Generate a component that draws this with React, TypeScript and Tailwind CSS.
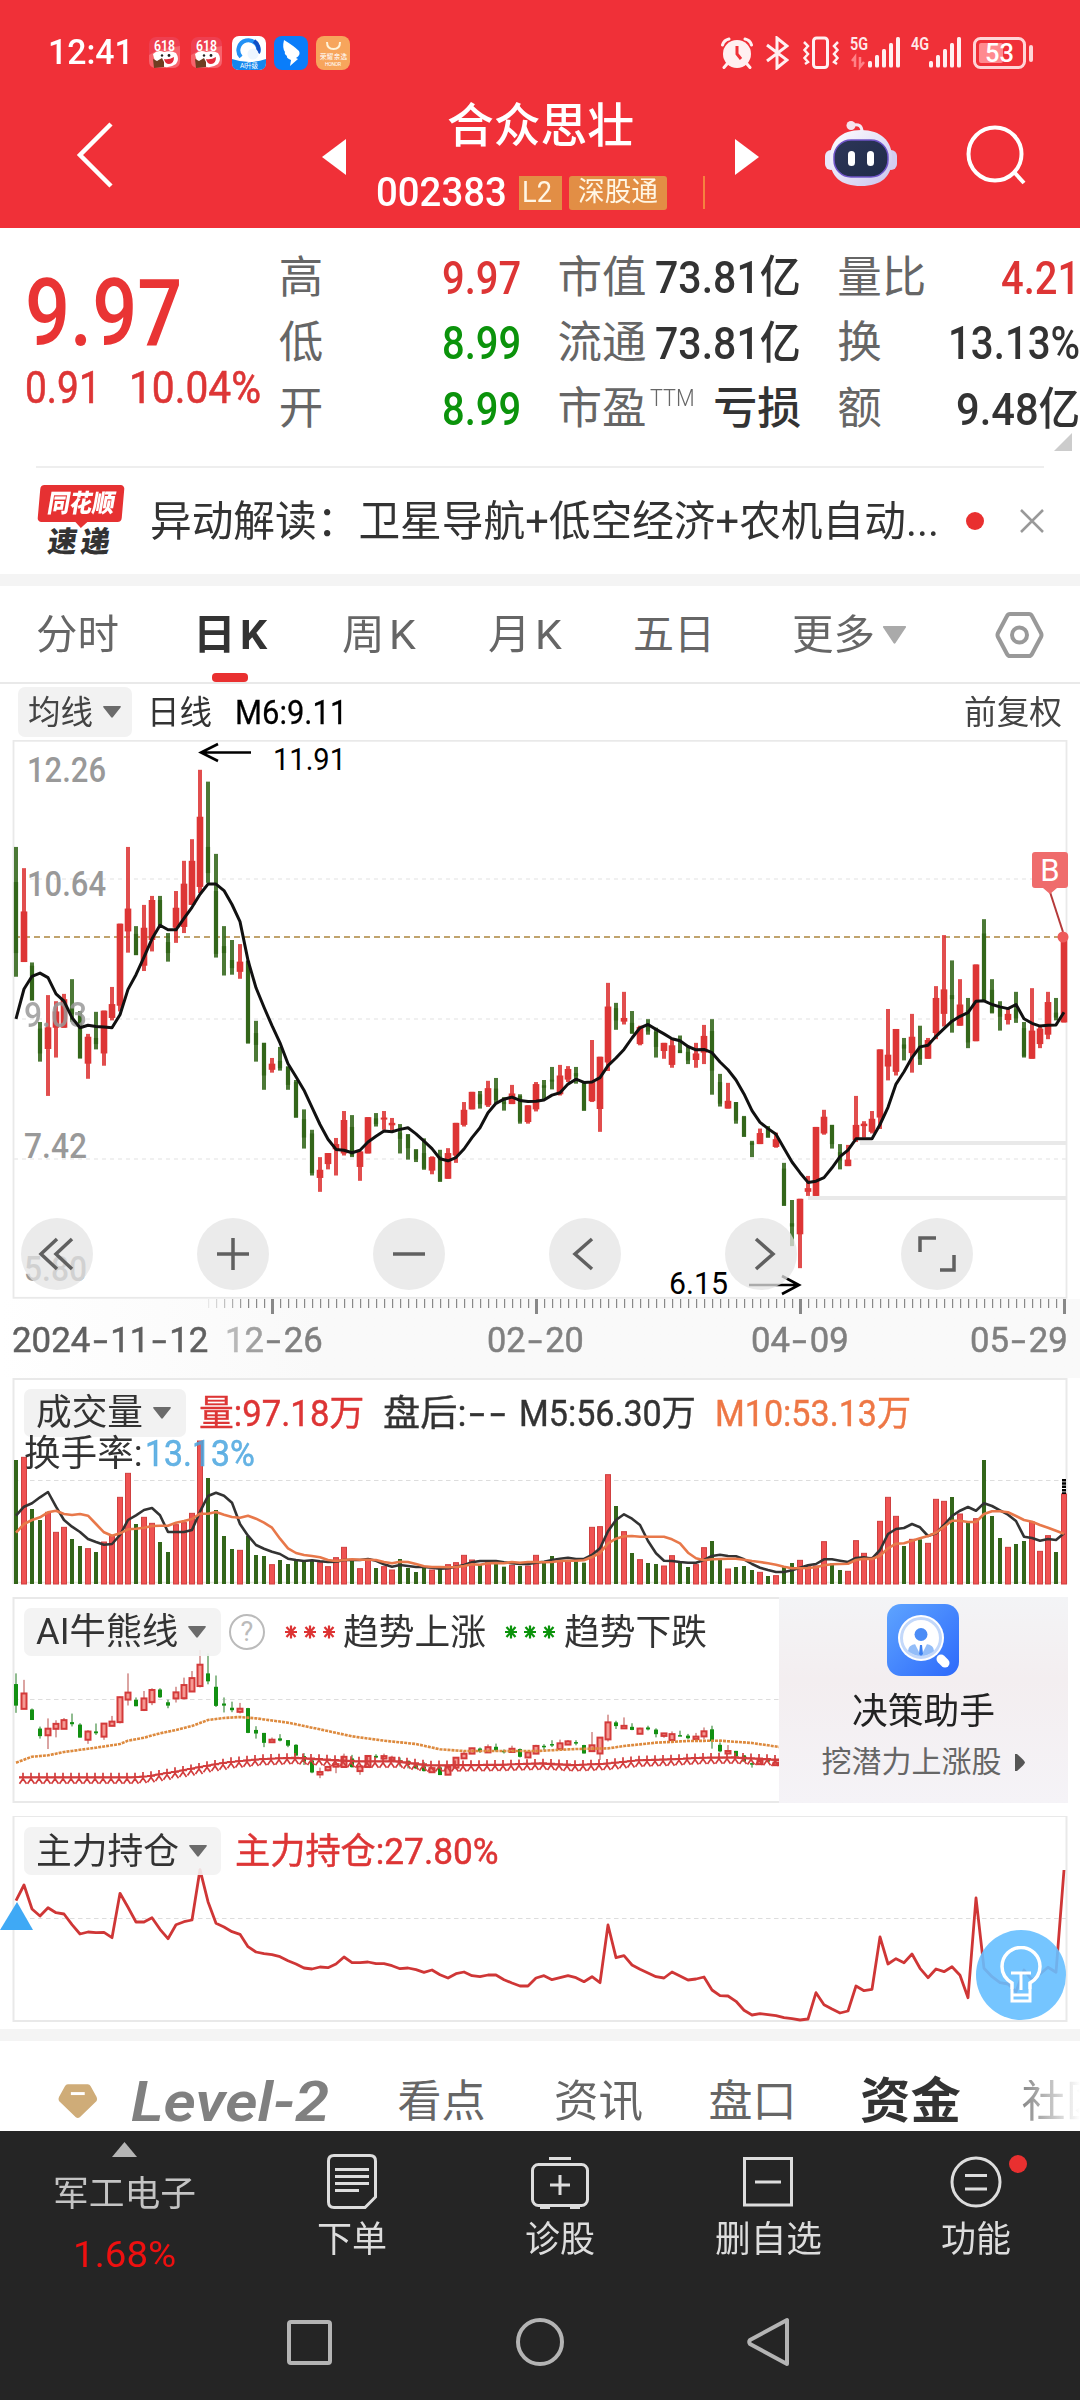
import React, { useLayoutEffect, useRef, useState } from 'react';

/** Single line of text squeezed horizontally to the width given by its class. */
function Fit({ className = '', children }: { className?: string; children: React.ReactNode }) {
  const outer = useRef<HTMLSpanElement>(null);
  const inner = useRef<HTMLSpanElement>(null);
  const [scale, setScale] = useState(1);
  useLayoutEffect(() => {
    if (outer.current && inner.current && inner.current.offsetWidth > 0) {
      setScale(outer.current.offsetWidth / inner.current.offsetWidth);
    }
  }, [children]);
  return (
    <span ref={outer} className={'block shrink-0 whitespace-nowrap leading-none ' + className}>
      <span ref={inner} className="inline-block origin-left" style={{ transform: `scaleX(${scale})` }}>
        {children}
      </span>
    </span>
  );
}

/** Hyphen as wide as a digit. */
function Dash() {
  return <span className="inline-block w-[20px] scale-x-[1.5] text-center">-</span>;
}

const X = (i: number) => 16 + 8 * i;
const RED = '#dd3535';
const GREEN = '#33661a';

// rising (1) or falling (0), high, body top, body bottom, low
const candles: number[][] = [
  [0,262,348,522,580],[1,314,420,544,544],[0,545,553,638,638],[0,691,707,768,788],[1,625,704,757,872],[1,640,665,705,778],
  [1,622,635,705,705],[0,586,655,672,690],[0,664,675,780,780],[1,720,727,793,830],[0,666,730,745,758],[1,663,663,768,798],
  [1,605,647,681,687],[1,450,450,651,665],[1,262,413,469,521],[0,456,475,527,527],[1,404,460,553,566],[1,382,392,490,518],
  [0,382,392,455,460],[0,473,495,522,543],[1,370,411,460,497],[1,296,352,458,473],[1,243,296,404,404],[1,73,188,360,375],
  [0,102,262,326,350],[0,279,370,524,533],[0,456,505,522,577],[0,490,539,559,575],[1,500,543,568,585],[0,540,542,742,744],
  [0,688,718,747,788],[0,742,742,822,857],[1,779,793,808,815],[0,752,786,804,810],[0,800,800,845,857],[0,833,838,925,925],
  [0,905,929,974,1001],[0,955,964,1061,1067],[1,1022,1053,1073,1107],[1,1012,1012,1039,1052],[1,975,990,1003,1067],
  [1,909,931,1013,1018],[0,919,948,1018,1022],[1,1008,1008,1046,1080],[1,924,924,1013,1013],[0,914,927,941,947],
  [1,909,925,930,955],[1,926,938,944,957],[0,941,962,977,1013],[0,966,966,1000,1028],[0,1003,1003,1028,1034],
  [0,976,1012,1050,1053],[1,1020,1022,1055,1064],[0,1004,1020,1082,1082],[1,1000,1012,1075,1075],[1,938,938,1018,1036],
  [1,887,906,943,947],[1,862,862,905,905],[0,860,868,892,903],[1,835,853,895,899],[0,828,854,882,892],[0,875,886,892,908],
  [1,845,866,892,892],[0,868,872,935,940],[1,895,895,936,940],[1,838,843,905,910],[0,833,846,852,880],[0,801,832,837,856],
  [1,796,822,868,871],[1,799,806,832,838],[0,801,816,824,842],[0,838,840,908,908],[1,735,838,885,887],[1,776,776,904,960],
  [1,595,653,790,811],[0,644,657,687,710],[1,617,681,690,697],[0,664,693,718,720],[1,700,703,745,748],[0,684,698,714,722],
  [0,705,715,752,778],[1,742,742,762,781],[1,730,748,796,803],[0,724,760,767,767],[0,750,764,785,794],[1,742,768,784,803],
  [1,698,725,766,794],[0,684,713,810,869],[0,818,838,891,898],[1,840,884,903,903],[0,887,887,932,940],[0,921,923,972,972],
  [0,982,986,992,1022],[1,952,963,990,990],[0,946,950,974,974],[1,962,978,997,999],[0,1036,1050,1141,1141],
  [0,1127,1184,1192,1240],[1,1124,1124,1211,1294],[1,1068,1098,1107,1117],[1,948,948,1117,1117],[1,906,923,964,967],
  [0,943,943,990,1001],[0,990,1010,1030,1052],[1,992,1028,1044,1044],[1,872,943,980,985],[1,934,940,946,974],
  [1,909,928,960,964],[1,758,758,925,953],[1,659,771,800,834],[1,708,708,813,822],[0,730,746,756,785],[1,671,727,767,815],
  [0,700,750,782,796],[1,730,735,781,781],[1,603,632,718,733],[1,478,611,671,702],[0,540,625,635,717],[1,586,648,700,700],
  [0,632,662,741,755],[1,550,550,738,738],[0,439,474,641,641],[0,586,612,668,670],[0,640,652,678,712],[1,658,671,686,697],
  [0,617,660,682,693],[0,691,706,775,778],[1,608,712,781,781],[1,700,707,745,755],[1,617,642,722,733],[0,632,668,680,687],
  [1,483,483,692,692],
];

const ma6 = [683,610,579,571,582,622,640,680,705,699,702,703,705,673,611,575,532,487,454,465,465,437,410,378,353,353,369,403,445,540,607,655,700,742,793,825,858,900,942,978,1003,1005,1011,1005,985,971,958,960,954,950,965,983,1001,1026,1031,1023,1002,974,950,913,890,880,875,883,886,885,882,870,864,843,831,839,838,827,798,779,758,730,705,697,709,720,732,737,751,759,758,766,789,808,833,867,908,937,952,966,1000,1034,1060,1084,1081,1072,1048,1021,1005,977,977,977,942,900,843,813,778,752,748,726,707,689,677,668,640,639,648,654,658,648,683,694,701,699,698,667];
const volume = [270,262,417,450,427,487,472,507,528,536,546,516,498,382,310,462,442,460,516,546,464,458,430,213,324,420,498,537,541,498,555,558,584,570,582,570,570,570,578,590,563,532,572,596,567,594,590,600,567,594,606,594,600,594,584,578,556,570,582,578,582,590,586,588,588,556,574,558,572,572,572,578,472,470,314,408,485,549,569,579,582,588,557,578,591,584,533,513,566,597,591,588,600,607,618,617,591,579,571,590,588,515,580,600,604,512,550,562,454,382,439,528,508,508,520,388,394,381,432,459,446,270,438,504,532,522,513,456,544,497,546,372];
const volM5 = [437,410,400,382,366,410,450,470,486,507,516,524,522,495,450,436,420,414,436,486,486,486,480,425,378,368,377,398,462,497,525,536,545,552,566,570,573,571,574,576,575,570,570,570,567,572,583,590,585,588,591,591,593,596,595,590,585,577,573,573,573,577,580,582,582,578,575,570,566,563,567,567,555,535,484,450,433,446,465,513,550,572,573,576,578,578,570,558,554,558,559,568,582,593,600,606,606,601,593,586,582,568,568,572,576,564,562,566,540,492,477,474,462,472,498,490,465,438,422,411,422,400,408,421,434,453,500,504,512,507,510,490];
const volM10 = [488,462,450,442,427,422,432,435,432,437,462,487,497,490,478,476,473,468,467,467,458,453,447,431,431,426,434,441,443,437,446,458,473,506,535,549,555,558,562,570,573,570,568,569,569,570,576,580,575,576,582,589,591,591,592,591,588,583,584,580,579,580,576,578,576,576,577,576,573,572,572,571,561,549,520,506,499,498,500,500,500,500,508,520,548,565,571,568,567,566,566,569,573,576,580,584,590,595,595,594,592,586,583,582,581,570,566,567,557,535,521,520,512,505,498,488,470,452,452,456,456,432,424,424,427,438,450,455,465,473,482,491];
const holding = [302,255,327,348,323,338,342,374,402,396,398,397,413,280,322,366,366,353,388,416,374,365,360,209,305,370,381,395,403,440,456,461,464,470,482,492,504,507,501,503,492,471,488,488,486,491,491,497,506,504,509,517,510,524,534,521,516,527,530,525,525,539,549,558,558,534,527,539,533,527,533,545,530,548,375,473,467,495,508,519,530,534,516,528,540,537,531,570,587,588,604,631,645,641,644,647,653,656,660,657,578,614,627,639,633,558,572,568,411,492,476,488,462,505,533,507,515,500,526,593,294,505,530,548,552,575,510,540,522,502,517,210];

// sparse control points: [bar index, level]
const bullCurve = [[0,1178],[2,1160],[4,1156],[6,1146],[10,1133],[13,1122],[14,1112],[16,1103],[18,1090],[20,1080],[22,1068],[24,1050],[26,1044],[28,1041],[30,1045],[34,1058],[38,1078],[42,1099],[46,1112],[50,1122],[53,1138],[56,1143],[65,1143],[70,1137],[74,1135],[76,1128],[80,1118],[84,1113],[88,1112],[92,1119],[96,1133]];
const bearCurve = [[0,1226],[14,1226],[16,1222],[20,1206],[23,1192],[26,1180],[30,1171],[34,1167],[37,1171],[42,1178],[47,1178],[51,1190],[56,1189],[60,1188],[65,1184],[69,1189],[73,1185],[77,1175],[81,1172],[85,1167],[89,1166],[93,1171],[96,1176]];

function interpolate(points: number[][], i: number) {
  for (let k = 1; k < points.length; k++) {
    const [a, va] = points[k - 1];
    const [b, vb] = points[k];
    if (i <= b) return va + ((vb - va) * (i - a)) / (b - a);
  }
  return points[points.length - 1][1];
}

const line = (data: number[], y: (v: number) => number) => data.map((v, i) => `${X(i)},${y(v).toFixed(1)}`).join(' ');

function Caret({ className = 'ml-[10px]' }: { className?: string }) {
  return (
    <svg className={'h-[12px] w-[18px] shrink-0 ' + className} viewBox="0 0 18 12">
      <path d="M1 0H17Q18.500 0 17.500 1.500L10 11Q9 12.500 8 11L.5 1.500Q-.5 0 1 0Z" fill="#6b6b6b" />
    </svg>
  );
}

function Signal({ label, arrows }: { label: string; arrows?: boolean }) {
  return (
    <svg className="h-[34px] w-[54px] overflow-visible" viewBox="0 0 54 34">
      <text x="0" y="14" fontSize="18" fontWeight="600" fill="#ffe9ea" textLength="18" lengthAdjust="spacingAndGlyphs">{label}</text>
      {arrows && (
        <g fill="none" stroke="#ff8287" strokeWidth="2.500">
          <path d="M5 31V21L2 25" />
          <path d="M10 21V31L14 26" />
        </g>
      )}
      <g fill="#ffeff0">
        <rect x="18" y="25" width="4" height="6.500" rx="1.500" />
        <rect x="25" y="19" width="4" height="12.500" rx="1.500" />
        <rect x="32" y="13" width="4" height="18.500" rx="1.500" />
        <rect x="39" y="7" width="4" height="24.500" rx="1.500" />
        <rect x="46" y="1" width="4" height="30.500" rx="1.500" />
      </g>
    </svg>
  );
}

function SaleIcon() {
  return (
    <svg className="h-[31px] w-[31px]" viewBox="0 0 31 31">
      <rect width="31" height="31" rx="7" fill="#ee3f50" />
      <path d="M0 18L9 13L31 9V24Q31 31 24 31H7Q0 31 0 24Z" fill="#f7636c" />
      <path d="M4 17Q9 12 15 15Q22 13 27 16Q31 22 27 27Q20 32 12 29Q5 25 4 17Z" fill="#fff" />
      <text x="5" y="14" fontSize="15" fontWeight="600" fill="#fff" textLength="21" lengthAdjust="spacingAndGlyphs">618</text>
      <path d="M15 22Q20 23 25 20Q25 27 20 27Q16 27 15 22Z" fill="#e32b3b" />
      <circle cx="13" cy="18.500" r="1.200" fill="#222" />
      <circle cx="20" cy="18.500" r="1.400" fill="#222" />
      <path d="M4 22L8 24L13 21L15 25V30L5 31Z" fill="#6e3e22" />
    </svg>
  );
}

function StatusBar() {
  return (
    <div className="flex h-[82px] items-center pt-[23px] pl-[48px]">
      <Fit className="w-[86px] text-[35px] font-medium text-white">12:41</Fit>
      <div className="ml-[15px] flex items-center gap-[10.5px]">
        <SaleIcon />
        <SaleIcon />
        <svg className="h-[34px] w-[34px]" viewBox="0 0 34 34">
          <rect width="34" height="34" rx="7" fill="#fff" />
          <path d="M0 23Q17 29 34 23V27Q34 34 27 34H7Q0 34 0 27Z" fill="#1487ee" />
          <path d="M9 21A10 10 0 1 1 26 17" fill="none" stroke="#2391f5" strokeWidth="4" />
          <path d="M22 5A10 10 0 0 1 26 17" fill="none" stroke="#114fc4" strokeWidth="4" />
          <circle cx="21" cy="18" r="5.500" fill="#eef6ff" />
          <text x="8" y="32" fontSize="6.500" fill="#fff" textLength="18">AI升级</text>
        </svg>
        <svg className="-ml-[2.5px] h-[34px] w-[34px]" viewBox="0 0 34 34">
          <rect width="34" height="34" rx="8" fill="#0a7dfa" />
          <path d="M10 4Q20 10 25 15Q27 19 22 22L24 23L16 30L17 24Q12 22 13 20Q10 18 11 16Q8 12 10 4Z" fill="#fff" />
        </svg>
        <svg className="-ml-[3px] h-[34px] w-[34px]" viewBox="0 0 34 34">
          <rect width="34" height="34" rx="8" fill="#f7a55c" />
          <path d="M11 6Q11 13 17.500 13Q24 13 24 6" fill="none" stroke="#fff3d8" strokeWidth="2" />
          <text x="4" y="22.500" fontSize="6.500" fill="#fff" textLength="27">荣耀亲选</text>
          <text x="9" y="30" fontSize="5" fill="#fff" textLength="16">HONOR</text>
        </svg>
      </div>
      <div className="ml-[371px] flex items-center">
        <svg className="h-[32px] w-[32px]" viewBox="0 0 32 32">
          <circle cx="16" cy="17" r="14" fill="#fff0f1" />
          <path d="M1.500 8Q3 3 8 2M30.500 8Q29 3 24 2M6 27L3 30.500M26 27L29 30.500" stroke="#fff0f1" strokeWidth="3" fill="none" strokeLinecap="round" />
          <path d="M16 9V17L20 22" stroke="#f03038" strokeWidth="3" fill="none" />
        </svg>
        <svg className="ml-[12px] h-[34px] w-[24px]" viewBox="0 0 24 34" fill="none" stroke="#fff0f1" strokeWidth="3">
          <path d="M2 9L22 24L12 32V2L22 10L2 25" />
        </svg>
        <svg className="ml-[13px] h-[34px] w-[38px]" viewBox="0 0 38 34" fill="none" stroke="#fff0f1" strokeWidth="3">
          <rect x="11.500" y="2" width="14" height="29.500" rx="3" />
          <path d="M2 6L6 10L2.500 14L6 18L2.500 22L6 26L3 28M36 6L32 10L35.500 14L32 18L35.500 22L32 26L35 28" strokeWidth="2.500" />
        </svg>
        <div className="ml-[10px]"><Signal label="5G" arrows /></div>
        <div className="ml-[7px]"><Signal label="4G" /></div>
        <svg className="ml-[8px] h-[34px] w-[61px]" viewBox="0 0 61 34">
          <rect x="1.500" y="2.500" width="50" height="29" rx="6" fill="none" stroke="#ffd5d7" strokeWidth="3" />
          <rect x="6" y="7" width="24" height="20" rx="2" fill="#ff8a8f" />
          <rect x="56" y="9" width="4" height="17" rx="2" fill="#ffd5d7" />
          <text x="12" y="25.500" fontSize="25" fontWeight="500" fill="#fff" textLength="29" lengthAdjust="spacingAndGlyphs">53</text>
        </svg>
      </div>
    </div>
  );
}

function TitleBar() {
  return (
    <div className="flex h-[146px] items-center pl-[76px]">
      <svg className="h-[66px] w-[38px]" viewBox="0 0 38 66" fill="none" stroke="#fff" strokeWidth="4.500">
        <path d="M35 2L4 33L35 64" />
      </svg>
      <svg className="mt-[3px] ml-[208px] h-[36px] w-[24px]" viewBox="0 0 24 36"><path d="M24 0V36L0 18Z" fill="#fff" /></svg>
      <div className="ml-[30px] flex h-full w-[330px] flex-col">
        <Fit className="mt-[20px] ml-[71px] h-[48px] w-[187px] text-[47px] font-medium text-white">合众思壮</Fit>
        <div className="mt-[22px] flex items-center">
          <Fit className="w-[131px] text-[41px] font-medium text-white">002383</Fit>
          <div className="ml-[12px] flex h-[34px] w-[43px] items-center bg-[#e28e45] pl-[3px]">
            <Fit className="w-[30px] text-[29px] text-[#fff6e4]">L2</Fit>
          </div>
          <div className="ml-[7px] flex h-[34px] w-[98px] items-center rounded-[3px] bg-[#e28e45] pl-[9px]">
            <Fit className="w-[80px] text-[27px] text-[#fff6e4]">深股通</Fit>
          </div>
          <div className="ml-[36px] h-[33px] w-[2px] bg-[#f6813f]" />
        </div>
      </div>
      <svg className="mt-[3px] ml-[29px] h-[36px] w-[24px]" viewBox="0 0 24 36"><path d="M0 0V36L24 18Z" fill="#fff" /></svg>
      <svg className="ml-[66px] h-[68px] w-[72px]" viewBox="0 0 72 68">
        <defs>
          <linearGradient id="shell" x1="0" y1="0" x2="1" y2="1">
            <stop offset="0" stopColor="#ffffff" />
            <stop offset="1" stopColor="#c9c3ee" />
          </linearGradient>
          <linearGradient id="visor" x1="0" y1="0" x2="1" y2="1">
            <stop offset="0" stopColor="#2c3658" />
            <stop offset="1" stopColor="#202b49" />
          </linearGradient>
        </defs>
        <rect x="0" y="29" width="12" height="20" rx="6" fill="#e9e7fa" />
        <rect x="60" y="29" width="12" height="20" rx="6" fill="#d3cdf2" />
        <path d="M28 4Q37 2 37 11" stroke="#f5e9f4" strokeWidth="3" fill="none" />
        <circle cx="26" cy="4.500" r="4.500" fill="#f6e4ee" />
        <path d="M36 9C56 9 67 20 67 37C67 56 56 65 36 65C16 65 5 56 5 37C5 20 16 9 36 9Z" fill="url(#shell)" />
        <rect x="9" y="19" width="54" height="37" rx="17" fill="url(#visor)" stroke="#6f54c8" strokeWidth="1.500" />
        <rect x="23" y="30" width="7" height="15" rx="3.500" fill="#fff" />
        <rect x="42" y="30" width="7" height="15" rx="3.500" fill="#fff" />
      </svg>
      <svg className="ml-[69px] h-[60px] w-[60px]" viewBox="0 0 60 60" fill="none" stroke="#fff" strokeWidth="4">
        <circle cx="29" cy="29" r="26.500" />
        <path d="M48 47L58 58" />
      </svg>
    </div>
  );
}

function QuotePanel() {
  const label = 'text-[44.5px] leading-none whitespace-nowrap text-[#666]';
  const column = 'grid h-[214px] grid-rows-3 pt-[17px]';
  const cell = 'flex items-center justify-between';
  return (
    <section className="relative flex h-[238px]">
      <div className="w-[279px] pl-[25px]">
        <Fit className="mt-[40px] h-[92px] w-[157px] text-[92px] font-medium text-[#e93434]">9.97</Fit>
        <div className="mt-[5px] flex [-webkit-text-stroke:0.6px]">
          <Fit className="w-[76px] text-[45px] text-[#dd3535]">0.91</Fit>
          <Fit className="ml-[28px] w-[132px] text-[45px] text-[#dd3535]">10.04%</Fit>
        </div>
      </div>
      <div className={column + ' w-[243px]'}>
        <div className={cell}><span className={label}>高</span><Fit className="w-[79px] text-[46px] font-medium text-[#dd3535]">9.97</Fit></div>
        <div className={cell}><span className={label}>低</span><Fit className="w-[79px] text-[46px] font-medium text-[#0b930b]">8.99</Fit></div>
        <div className={cell}><span className={label}>开</span><Fit className="w-[79px] text-[46px] font-medium text-[#0b930b]">8.99</Fit></div>
      </div>
      <div className={column + ' ml-[36px] w-[244px] text-[#333]'}>
        <div className={cell}><span className={label}>市值</span><Fit className="w-[146px] text-[45px] font-medium">73.81亿</Fit></div>
        <div className={cell}><span className={label}>流通</span><Fit className="w-[146px] text-[45px] font-medium">73.81亿</Fit></div>
        <div className={cell}>
          <div className="flex">
            <span className={label}>市盈</span>
            <Fit className="ml-[3px] w-[45px] text-[23px] font-light text-[#666]">TTM</Fit>
          </div>
          <span className="text-[44px] leading-none font-medium whitespace-nowrap">亏损</span>
        </div>
      </div>
      <div className={column + ' ml-[36px] w-[243px] text-[#333]'}>
        <div className={cell}><span className={label}>量比</span><Fit className="w-[79px] text-[46px] font-medium text-[#dd3535]">4.21</Fit></div>
        <div className={cell}><span className={label}>换</span><Fit className="w-[132px] text-[46px] font-medium">13.13%</Fit></div>
        <div className={cell}><span className={label}>额</span><Fit className="w-[124px] text-[45px] font-medium">9.48亿</Fit></div>
      </div>
      <svg className="absolute top-[205px] left-[1054px] h-[18px] w-[18px]" viewBox="0 0 18 18"><path d="M18 0V18H0Z" fill="#ccc" /></svg>
    </section>
  );
}

function NewsRow() {
  return (
    <section className="mx-[36px] flex h-[108px] items-center border-t-2 border-[#eee]">
      <div className="flex h-[72px] w-[90px] flex-col items-center">
        <div className="relative flex h-[37px] w-[84px] -skew-x-[5deg] items-center justify-center rounded-[4px] bg-[#e63132]">
          <Fit className="w-[67px] -skew-x-[5deg] text-[25px] font-black text-white">同花顺</Fit>
          <svg className="absolute top-[36px] left-[37px] h-[7px] w-[14px]" viewBox="0 0 14 7"><path d="M0 0H14L7 7Z" fill="#e63132" /></svg>
        </div>
        <Fit className="mt-[6px] w-[66px] -skew-x-[8deg] text-[29px] font-black tracking-[4px] text-[#333]">速递</Fit>
      </div>
      <Fit className="mt-[1px] ml-[24px] w-[789px] text-[42px] text-[#333]">异动解读：卫星导航+低空经济+农机自动...</Fit>
      <div className="ml-[27px] h-[18px] w-[18px] rounded-full bg-[#e93030]" />
      <svg className="ml-[36px] h-[24px] w-[24px]" viewBox="0 0 24 24" stroke="#999" strokeWidth="2.500"><path d="M1 1L23 23M23 1L1 23" /></svg>
    </section>
  );
}

function PeriodTabs() {
  return (
    <nav className="flex h-[98px] items-center border-b-2 border-[#e9e9e9] pt-[2px] pl-[36px] text-[41px] text-[#666]">
      <Fit className="w-[83px]">分时</Fit>
      <div className="relative ml-[74px]">
        <Fit className="w-[74px] font-bold text-[#333]">日<span className="ml-[4px]">K</span></Fit>
        <div className="absolute top-[58px] left-[19px] h-[9px] w-[36px] rounded-[4px] bg-[#e93030]" />
      </div>
      <Fit className="ml-[75px] w-[74px]">周<span className="ml-[4px]">K</span></Fit>
      <Fit className="ml-[72px] w-[74px]">月<span className="ml-[4px]">K</span></Fit>
      <Fit className="ml-[71px] w-[82px]">五日</Fit>
      <Fit className="ml-[77px] w-[83px]">更多</Fit>
      <svg className="ml-[8px] h-[18px] w-[23px]" viewBox="0 0 23 18"><path d="M1 0H22Q24 0 22.500 2L12.500 17Q11.500 18.500 10.500 17L.5 2Q-1 0 1 0Z" fill="#aaa" /></svg>
      <svg className="ml-[89px] h-[46px] w-[49px]" viewBox="0 0 49 46" fill="none" stroke="#999" strokeWidth="4">
        <path d="M15 2H34Q36 2 37 4L46 21Q47 23 46 25L37 42Q36 44 34 44H15Q13 44 12 42L3 25Q2 23 3 21L12 4Q13 2 15 2Z" />
        <circle cx="24.500" cy="23" r="7.500" />
      </svg>
    </nav>
  );
}

function PriceLegend() {
  return (
    <div className="flex h-[56px] items-center pl-[18px] text-[33px] text-[#333]">
      <div className="flex h-[50px] w-[114px] items-center rounded-[7px] bg-[#f2f2f2] pl-[10px] text-[#444]">
        <Fit className="w-[65px]">均线</Fit>
        <Caret />
      </div>
      <Fit className="ml-[15px] w-[65px]">日线</Fit>
      <Fit className="ml-[23px] w-[112px] text-[34px] text-black [-webkit-text-stroke:0.3px]">M6:9.11</Fit>
      <Fit className="ml-[617px] w-[98px] text-[#444]">前复权</Fit>
    </div>
  );
}

function PriceChart() {
  const y = (v: number) => v / 2.45;
  const btn = 'flex h-[72px] w-[72px] items-center justify-center rounded-full bg-[#e4e4e4]/75';
  return (
    <section className="relative h-[559px]">
      <svg className="block h-[559px] w-full" viewBox="0 0 1080 559">
        <rect x="13.500" y=".8" width="1053" height="557" fill="none" stroke="#e9e9e9" strokeWidth="1.800" />
        {[139, 279, 419].map((v) => <path key={v} d={`M14 ${v}H1066`} stroke="#ebebeb" strokeWidth="1.500" strokeDasharray="4 4" />)}
        <path d="M14 197H1066" stroke="#c0a36d" strokeWidth="1.800" strokeDasharray="6 4" />
        <path d="M860 403H1067M808 458H1067" stroke="#e9e9e9" strokeWidth="4" />
        {candles.map(([up, h, a, b, l], i) => (
          <g key={i} fill={up ? RED : GREEN}>
            <rect x={X(i) - 2} y={y(h)} width="4" height={y(l - h)} opacity=".88" />
            <rect x={X(i) - (up ? 3.300 : 2.100)} y={y(a)} width={up ? 6.600 : 4.200} height={y(b - a)} />
          </g>
        ))}
        <g fill="#999" fontSize="35" fontWeight="500">
          <text x="27" y="41.500" textLength="79" lengthAdjust="spacingAndGlyphs">12.26</text>
          <text x="27" y="155.500" textLength="79" lengthAdjust="spacingAndGlyphs">10.64</text>
          <text x="24" y="287" textLength="63" lengthAdjust="spacingAndGlyphs" opacity=".85">9.03</text>
          <text x="24" y="418" textLength="63" lengthAdjust="spacingAndGlyphs">7.42</text>
          <text x="24" y="541" textLength="63" lengthAdjust="spacingAndGlyphs">5.80</text>
        </g>
        <polyline points={line(ma6, y)} fill="none" stroke="#111" strokeWidth="3" strokeLinejoin="round" />
        <path d="M251 12.500H201M218 4L201 12.500L218 21M749 545H799M782 536L799 545L782 554" fill="none" stroke="#000" strokeWidth="2.600" />
        <text x="273" y="29.500" fontSize="31" fill="#000" textLength="73" lengthAdjust="spacingAndGlyphs">11.91</text>
        <text x="669" y="554" fontSize="31" fill="#000" textLength="59" lengthAdjust="spacingAndGlyphs">6.15</text>
        <path d="M1050 152L1063 192" stroke="#b53a3a" strokeWidth="2" />
        <circle cx="1063" cy="197" r="5.500" fill="#ee5a5a" />
        <path d="M1035 112H1065Q1068 112 1068 115V145Q1068 148 1065 148H1057L1050 154L1043 148H1035Q1032 148 1032 145V115Q1032 112 1035 112Z" fill="#ef6c6c" />
        <text x="1050" y="141" fontSize="31" fill="#fff" textAnchor="middle">B</text>
      </svg>
      <div className="absolute top-[478px] left-[21px] flex gap-[104px]">
        {[
          'M17 2L1 17L17 32M32 2L16 17L32 32',
          'M17 1V33M1 17H33',
          'M1 17H33',
          'M24 2L7 17L24 32',
          'M12 2L29 17L12 32',
          'M0 15V1H16M20 33H34V18',
        ].map((d) => (
          <button key={d} className={btn}>
            <svg className="h-[34px] w-[34px] overflow-visible" viewBox="0 0 34 34" fill="none" stroke="#606060" strokeWidth="3.500"><path d={d} /></svg>
          </button>
        ))}
      </div>
    </section>
  );
}

function DateAxis() {
  return (
    <div className="h-[79px] bg-linear-to-r from-white via-[#f9f9f9] via-30% to-[#f9f9f9]">
      <svg className="block h-[18px] w-full" viewBox="0 0 1080 18">
        {candles.map((_, i) => {
          if (i < 24) return null;
          const major = (i - 32) % 33 === 0;
          return <rect key={i} x={X(i) + (major ? -1 : 0)} y="0" width={major ? 3 : 1.200} height={major ? 15 : 9} fill="#888" opacity={Math.min(1, (i - 23) / 6)} />;
        })}
      </svg>
      <div className="mt-[6px] flex pl-[12px] text-[35px] text-[#808080] [-webkit-text-stroke:0.5px]">
        <Fit className="w-[196px] text-[#606060]">2024<Dash />11<Dash />12</Fit>
        <Fit className="ml-[17px] w-[98px]"><span className="text-[#b8b8b8]">1</span><span className="text-[#a0a0a0]">2</span><Dash />26</Fit>
        <Fit className="ml-[164px] w-[97px]">02<Dash />20</Fit>
        <Fit className="ml-[167px] w-[98px]">04<Dash />09</Fit>
        <Fit className="ml-[121px] w-[98px]">05<Dash />29</Fit>
      </div>
    </div>
  );
}

function VolumeChart() {
  const y = (v: number) => v / 3 - 8;
  return (
    <section className="relative h-[207px]">
      <svg className="block h-[207px] w-full" viewBox="0 0 1080 207">
        <path d="M13.500 206V1H1066.500V206" fill="none" stroke="#e9e9e9" strokeWidth="2" />
        <path d="M14 102.500H1066" stroke="#ddd" strokeWidth="1.200" strokeDasharray="4.500 3.500" />
        <path d="M14 204.500H1066" stroke="#e6e8e0" strokeWidth="1.500" />
        {volume.map((v, i) =>
          candles[i][0] ? (
            <rect key={i} x={X(i) - 2.500} y={y(v)} width="5" height={206 - y(v)} fill="#ef5252" stroke="#cf4040" strokeWidth="1" />
          ) : (
            <rect key={i} x={X(i) - 2} y={y(v)} width="4" height={206 - y(v)} fill={GREEN} />
          )
        )}
        <path d="M1064 101V116" stroke="#000" strokeWidth="4" strokeDasharray="2.500 .8" />
        <polyline points={line(volM5, y)} fill="none" stroke="#333" strokeWidth="2.600" strokeLinejoin="round" />
        <polyline points={line(volM10, y)} fill="none" stroke="#e8784a" strokeWidth="2.600" strokeLinejoin="round" />
      </svg>
      <div className="absolute top-[11px] left-[24px] w-[1040px] text-[36px] text-[#333]">
        <div className="flex h-[48px] items-center">
          <div className="flex h-[48px] w-[162px] items-center rounded-[7px] bg-[#f2f2f2] pl-[12px]">
            <Fit className="w-[107px]">成交量</Fit>
            <Caret />
          </div>
          <div className="mt-[2px] ml-[13px] flex [-webkit-text-stroke:0.4px]">
            <Fit className="w-[165px] text-[#dd3535]">量:97.18万</Fit>
            <Fit className="ml-[19px] w-[125px]">盘后:<Dash /><Dash /></Fit>
            <Fit className="ml-[11px] w-[177px]">M5:56.30万</Fit>
            <Fit className="ml-[19px] w-[196px] text-[#ee7745]">M10:53.13万</Fit>
          </div>
        </div>
        <div className="-mt-[1px] flex">
          <Fit className="w-[119px]">换手率:</Fit>
          <Fit className="ml-[2px] w-[110px] text-[#4aa6df]/85 [-webkit-text-stroke:0.5px]">13.13%</Fit>
        </div>
      </div>
    </section>
  );
}

function Stars({ className }: { className: string }) {
  return (
    <svg className={'h-[14px] w-[50px] shrink-0 ' + className} viewBox="0 0 50 14" fill="none" stroke="currentColor" strokeWidth="2.200">
      {[6, 25, 44].map((x) => <path key={x} d={`M${x} .5V13.500M${x - 6} 7H${x + 6}M${x - 4.500} 2L${x + 4.500} 12M${x + 4.500} 2L${x - 4.500} 12`} />)}
    </svg>
  );
}

function BullBearChart() {
  const y = (v: number) => v * 0.124 + 43.9;
  const cy = (v: number) => v / 3 - 227;
  const idx = Array.from({ length: 97 }, (_, i) => i);
  return (
    <section className="relative mt-[12px] h-[206px]">
      <svg className="block h-[206px] w-full" viewBox="0 0 1080 206">
        <rect x="13.500" y="1" width="1053" height="204" fill="none" stroke="#e9e9e9" strokeWidth="2" />
        <path d="M14 102.500H779" stroke="#ddd" strokeWidth="1.200" strokeDasharray="4.500 3.500" />
        {idx.map((i) => {
          const [up, h, a, b, l] = candles[i];
          const bh = Math.max(1.500, y(b) - y(a));
          return (
            <g key={i}>
              <rect x={X(i) - 0.9} y={y(h)} width="1.800" height={y(l) - y(h)} fill={up ? '#d79b98' : '#84b584'} />
              {up ? (
                <rect x={X(i) - 2.500} y={y(a) + 0.500} width="5" height={Math.max(2.500, bh)} fill="#f59a94" stroke="#d43a3a" strokeWidth="2" />
              ) : (
                <rect x={X(i) - 2} y={y(a)} width="4" height={bh} fill="#129012" />
              )}
            </g>
          );
        })}
        <polyline points={idx.map((i) => `${X(i)},${cy(interpolate(bullCurve, i))}`).join(' ')} fill="none" stroke="#dd8a3e" strokeWidth="2.600" strokeDasharray="3 1" />
        <g fill="none" stroke="#d23c3c">
          <polyline points={idx.map((i) => `${X(i) + 3},${cy(interpolate(bearCurve, i)) - 1}`).join(' ')} strokeWidth="1.800" />
          {idx.map((i) => {
            const sy = cy(interpolate(bearCurve, i));
            const sx = X(i) + 7;
            return <path key={i} d={`M${sx} ${sy - 6}V${sy}M${sx - 4} ${sy - 1.500}H${sx + 4}M${sx - 3.500} ${sy + 5}L${sx} ${sy}L${sx + 3.500} ${sy + 5}`} strokeWidth="1.700" />;
          })}
        </g>
      </svg>
      <div className="absolute top-[11px] left-[24px] flex h-[48px] items-center text-[36px] text-[#333]">
        <div className="flex h-[48px] w-[197px] items-center rounded-[7px] bg-[#f2f2f2]/90 pl-[12px]">
          <Fit className="w-[142px]">AI牛熊线</Fit>
          <Caret />
        </div>
        <div className="ml-[8px] flex h-[36px] w-[36px] items-center justify-center rounded-full border-[2.5px] border-[#bbb] text-[27px] leading-none text-[#bbb]">?</div>
        <Stars className="ml-[20px] text-[#dd3333]" />
        <Fit className="mt-[1px] ml-[8px] w-[143px]">趋势上涨</Fit>
        <Stars className="ml-[19px] text-[#0b930b]" />
        <Fit className="mt-[1px] ml-[9px] w-[143px]">趋势下跌</Fit>
      </div>
      <aside className="absolute top-0 left-[779px] flex h-[206px] w-[289px] flex-col items-center bg-linear-to-b from-[#f3f4f6] via-[#f3eef0] via-40% to-[#f5f3f7] pr-[1px]">
        <svg className="mt-[7px] h-[72px] w-[72px] shrink-0" viewBox="0 0 72 72">
          <defs>
            <linearGradient id="tile" x1="0" y1="0" x2="1" y2="1">
              <stop offset="0" stopColor="#5ea4ff" />
              <stop offset="1" stopColor="#2d69fb" />
            </linearGradient>
          </defs>
          <rect width="72" height="72" rx="14" fill="url(#tile)" />
          <circle cx="34" cy="34" r="23" fill="#fff" />
          <circle cx="34" cy="34" r="19.500" fill="#fff" stroke="#c3d8fa" strokeWidth="3" />
          <path d="M21 47Q21 41 29 40L34 43L39 40Q47 41 47 47Q41 52 34 52Q27 52 21 47Z" fill="#93bdf8" />
          <path d="M28 40L34 52L40 40Z" fill="#fff" />
          <path d="M33 41H35L36 50L34 52L32 50Z" fill="#3b7ff0" />
          <circle cx="34" cy="30.500" r="6.500" fill="#4b8cf6" />
          <path d="M54 55L58 59" stroke="#fff" strokeWidth="9" strokeLinecap="round" />
        </svg>
        <Fit className="mt-[18px] w-[143px] text-[36px] text-[#222]">决策助手</Fit>
        <div className="mt-[17px] flex items-center">
          <Fit className="w-[180px] text-[30px] text-[#666]">挖潜力上涨股</Fit>
          <svg className="ml-[13px] h-[17px] w-[10px]" viewBox="0 0 10 17"><path d="M0 0L2 0Q10 7 10 8.500Q10 10 2 17H0Z" fill="#555" /></svg>
        </div>
      </aside>
    </section>
  );
}

function HoldingChart() {
  const y = (v: number) => v / 3 - 16;
  return (
    <section className="relative mt-[13px] h-[206px]">
      <svg className="block h-[206px] w-full" viewBox="0 0 1080 206">
        <rect x="13.500" y="0" width="1053" height="205" fill="none" stroke="#e9e9e9" strokeWidth="2" />
        <path d="M14 102.500H1066" stroke="#ddd" strokeWidth="1.200" strokeDasharray="4.500 3.500" />
        <polyline points={line(holding, y)} fill="none" stroke="#cf3636" strokeWidth="2.800" strokeLinejoin="round" />
        <path d="M17 86L33 114H0Z" fill="#3fa9f5" />
      </svg>
      <div className="absolute top-[11px] left-[24px] flex h-[48px] items-center text-[36px] text-[#333]">
        <div className="flex h-[48px] w-[197px] items-center rounded-[7px] bg-[#f2f2f2]/90 pl-[12px]">
          <Fit className="mt-[1px] w-[143px]">主力持仓</Fit>
          <Caret />
        </div>
        <Fit className="mt-[1px] ml-[14px] w-[264px] text-[#dd3535] [-webkit-text-stroke:0.5px]">主力持仓:27.80%</Fit>
      </div>
      <div className="absolute top-[114px] left-[976px] flex h-[90px] w-[90px] items-center justify-center rounded-full bg-[#66bfff]/90">
        <svg className="h-[58px] w-[42px]" viewBox="0 0 42 58" fill="none" stroke="#fff" strokeWidth="3.500">
          <path d="M12 43V37Q2 31 2 20.500A19 19 0 0 1 40 20.500Q40 31 30 37V43" />
          <path d="M11 27H31M21 27V44M12 43V55H30V43M12 49H30" strokeWidth="3" />
        </svg>
      </div>
    </section>
  );
}

function InfoTabs() {
  return (
    <nav className="flex h-[90px] items-center pt-[31px] pl-[58px] text-[44px] text-[#666]">
      <svg className="-mt-[2px] h-[36px] w-[40px]" viewBox="0 0 40 36">
        <path d="M10 1H30Q32 1 33 3L39 14Q40 16 39 18L22 34.500Q20 36 18 34.500L1 18Q0 16 1 14L7 3Q8 1 10 1Z" fill="#cfac78" />
        <path d="M13 10.500H27" stroke="#fff" strokeWidth="3" />
      </svg>
      <Fit className="ml-[33px] w-[198px] text-[56px] font-semibold text-[#808080] italic">Level-2</Fit>
      <Fit className="ml-[69px] w-[88px]">看点</Fit>
      <Fit className="ml-[68px] w-[89px]">资讯</Fit>
      <Fit className="ml-[66px] w-[88px]">盘口</Fit>
      <Fit className="ml-[63px] w-[101px] text-[49px] font-bold text-[#333]">资金</Fit>
      <span className="ml-[61px] w-[59px] overflow-hidden bg-linear-to-r from-[#888] to-white bg-clip-text leading-none whitespace-nowrap text-transparent">社区</span>
    </nav>
  );
}

function BottomBar() {
  const item = 'relative flex w-[208px] flex-col items-center text-[36px] text-[#ddd]';
  const icon = 'mt-[23px] h-[56px] w-[60px]';
  return (
    <footer className="h-[269px] bg-[#252525]">
      <div className="flex h-[165px]">
        <div className="flex w-[248px] flex-col items-center">
          <svg className="mt-[11px] h-[15px] w-[25px]" viewBox="0 0 25 15"><path d="M12.500 0L25 15H0Z" fill="#b5b5b5" /></svg>
          <Fit className="mt-[20px] w-[143px] text-[35px] text-[#c4c4c4]">军工电子</Fit>
          <Fit className="mt-[24px] w-[103px] text-[37px] text-[#ee1010]">1.68%</Fit>
        </div>
        <div className={item}>
          <svg className={icon} viewBox="0 0 60 56" fill="none" stroke="#ddd" strokeWidth="3">
            <path d="M12 1.500H48Q53.500 1.500 53.500 7V43L43 53.500H12Q6.500 53.500 6.500 48V7Q6.500 1.500 12 1.500Z" />
            <path d="M13 15.500H47M13 22.500H47M13 29.500H47M13 36.500H37" />
          </svg>
          <Fit className="mt-[12px] w-[70px]">下单</Fit>
        </div>
        <div className={item}>
          <svg className={icon} viewBox="0 0 60 56" fill="none" stroke="#ddd" strokeWidth="3">
            <rect x="2.500" y="10.500" width="55" height="41" rx="6" />
            <path d="M19 4.500H41M30 21V41M20 31H40M10 53.500H20M40 53.500H50" />
          </svg>
          <Fit className="mt-[12px] w-[70px]">诊股</Fit>
        </div>
        <div className={item}>
          <svg className={icon} viewBox="0 0 60 56" fill="none" stroke="#ddd" strokeWidth="3">
            <path d="M6.500 4.500H53.500V51H6.500ZM17 28H43" />
          </svg>
          <Fit className="mt-[12px] w-[107px]">删自选</Fit>
        </div>
        <div className={item}>
          <svg className={icon} viewBox="0 0 60 56" fill="none" stroke="#ddd" strokeWidth="3">
            <circle cx="30" cy="28" r="24" />
            <path d="M19 21.500H41M19 35H41" />
          </svg>
          <Fit className="mt-[12px] w-[70px]">功能</Fit>
          <div className="absolute top-[24px] left-[137px] h-[18px] w-[18px] rounded-full bg-[#e93030]" />
        </div>
      </div>
      <div className="flex h-[92px] items-center pl-[287px]">
        <div className="h-[45px] w-[45px] rounded-[4px] border-4 border-[#b4b4b4]" />
        <div className="ml-[184px] h-[48px] w-[48px] rounded-full border-4 border-[#b4b4b4]" />
        <svg className="ml-[183px] h-[50px] w-[44px]" viewBox="0 0 44 50" fill="none" stroke="#b4b4b4" strokeWidth="4" strokeLinejoin="round">
          <path d="M40 3V47L3 27Q1.500 25 3 23Z" />
        </svg>
      </div>
    </footer>
  );
}

export default function App() {
  return (
    <main className="h-[2400px] w-[1080px] overflow-hidden bg-white font-[Roboto,'Noto_Sans_CJK_SC',sans-serif]">
      <header className="h-[228px] bg-[#f03038]">
        <StatusBar />
        <TitleBar />
      </header>
      <QuotePanel />
      <NewsRow />
      <div className="h-[12px] bg-[#f4f4f4]" />
      <PeriodTabs />
      <PriceLegend />
      <PriceChart />
      <DateAxis />
      <VolumeChart />
      <BullBearChart />
      <HoldingChart />
      <div className="mt-[7px] h-[12px] bg-[#f4f4f4]" />
      <InfoTabs />
      <BottomBar />
    </main>
  );
}
